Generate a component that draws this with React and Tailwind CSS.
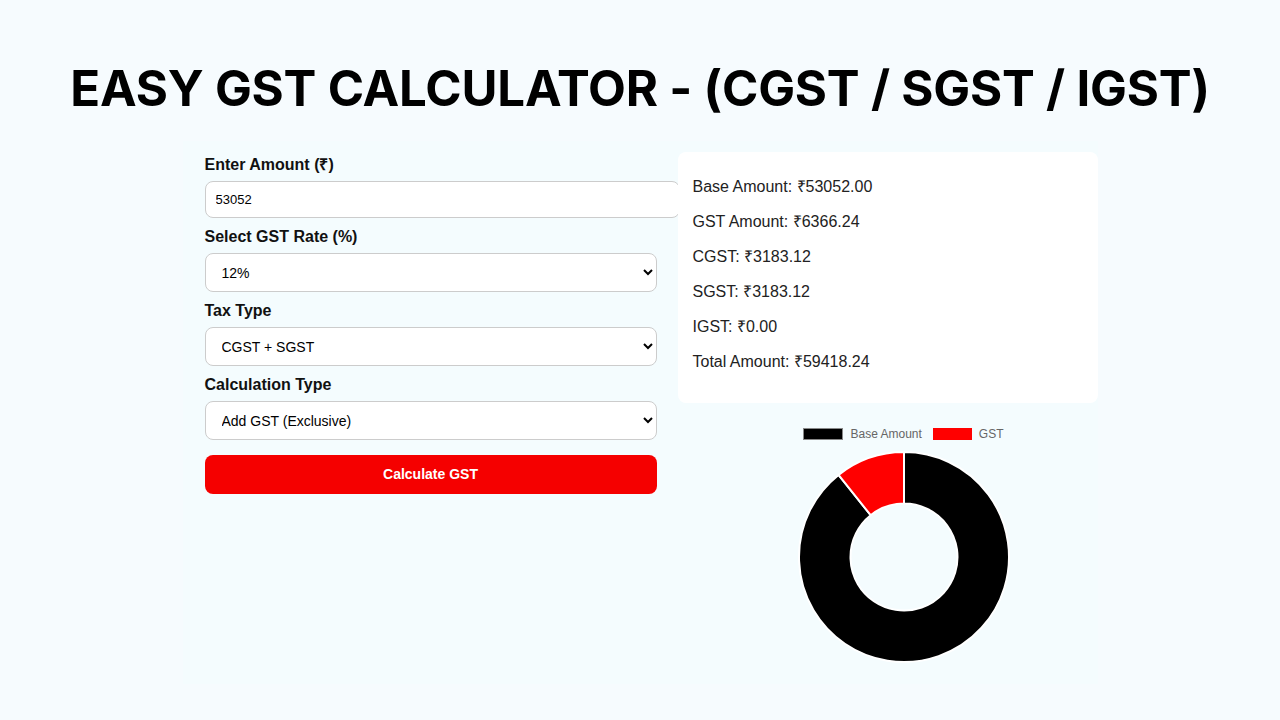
import { useState } from 'react';

const rates = ['0', '5', '12', '18', '28'];

// simple donut drawn as svg arcs
const Donut = ({ base, gst }) => {
  const total = base + gst;
  const cx = 110;
  const cy = 110;
  const r1 = 105;
  const r0 = 53.5;
  const pt = (a, r) => [cx + r * Math.sin(a), cy - r * Math.cos(a)];
  const arc = (a0, a1) => {
    const large = a1 - a0 > Math.PI ? 1 : 0;
    const [x0, y0] = pt(a0, r1);
    const [x1, y1] = pt(a1, r1);
    const [x2, y2] = pt(a1, r0);
    const [x3, y3] = pt(a0, r0);
    return `M${x0} ${y0} A${r1} ${r1} 0 ${large} 1 ${x1} ${y1} L${x2} ${y2} A${r0} ${r0} 0 ${large} 0 ${x3} ${y3} Z`;
  };
  const split = (base / total) * Math.PI * 2;
  return (
    <svg width="220" height="220" viewBox="0 0 220 220">
      <path d={arc(0, split)} fill="#000" stroke="#fff" strokeWidth="2" />
      <path d={arc(split, Math.PI * 2)} fill="#f00" stroke="#fff" strokeWidth="2" />
    </svg>
  );
};

const App = () => {
  const [amount, setAmount] = useState('53052');
  const [rate, setRate] = useState('12');
  const [taxType, setTaxType] = useState('cgst');
  const [calcType, setCalcType] = useState('add');

  const base = 53052;
  const gst = 6366.24;

  const labelCls = 'block h-[18px] leading-[18px] text-[16px] font-bold text-[#111] mb-[7px]';
  const selectCls =
    'block w-full h-[39px] px-[12px] text-[14px] text-black bg-white border border-[#ccc] rounded-[8px] mb-[10px]';

  return (
    <div
      className="min-h-screen bg-[#f6fbfe] overflow-hidden"
      style={{ fontFamily: '"Liberation Sans", Arial, sans-serif' }}
    >
      <h1
        className="text-center text-[49.2px] leading-none font-bold text-black pt-[64px] tracking-[-0.2px]"
        style={{ fontFamily: 'Inter, sans-serif' }}
      >
        EASY GST CALCULATOR - (CGST / SGST / IGST)
      </h1>

      <div className="mx-auto mt-[28px] w-[915px] h-[543px] bg-[#f4fcfe] flex">
        {/* form */}
        <div className="w-[495px] pl-[22px] pr-[21px] pt-[15px]">
          <label className={labelCls}>Enter Amount (₹)</label>
          <input
            type="text"
            value={amount}
            onChange={(e) => setAmount(e.target.value)}
            className="block w-[475px] h-[37px] px-[10px] text-[13px] text-black bg-white border border-[#ccc] rounded-[8px] mb-[10px] outline-none"
          />
          <label className={labelCls}>Select GST Rate (%)</label>
          <select value={rate} onChange={(e) => setRate(e.target.value)} className={selectCls}>
            {rates.map((r) => (
              <option key={r} value={r}>
                {r}%
              </option>
            ))}
          </select>
          <label className={labelCls}>Tax Type</label>
          <select value={taxType} onChange={(e) => setTaxType(e.target.value)} className={selectCls}>
            <option value="cgst">CGST + SGST</option>
            <option value="igst">IGST</option>
          </select>
          <label className={labelCls}>Calculation Type</label>
          <select value={calcType} onChange={(e) => setCalcType(e.target.value)} className={selectCls}>
            <option value="add">Add GST (Exclusive)</option>
            <option value="remove">Remove GST (Inclusive)</option>
          </select>
          <button
            type="button"
            className="mt-[5px] w-full h-[39px] bg-[#f50000] text-white text-[14px] font-bold rounded-[8px]"
          >
            Calculate GST
          </button>
        </div>

        {/* results + chart */}
        <div className="w-[420px] pt-[11px]">
          <div className="bg-white rounded-[8px] pl-[15px] pt-[17px] pb-[24px] text-[16px] text-[#222]">
            <div className="h-[35px] flex items-center">Base Amount: ₹53052.00</div>
            <div className="h-[35px] flex items-center">GST Amount: ₹6366.24</div>
            <div className="h-[35px] flex items-center">CGST: ₹3183.12</div>
            <div className="h-[35px] flex items-center">SGST: ₹3183.12</div>
            <div className="h-[35px] flex items-center">IGST: ₹0.00</div>
            <div className="h-[35px] flex items-center">Total Amount: ₹59418.24</div>
          </div>

          <div className="flex flex-col items-center pl-[32px] pt-[24px]">
            <div className="flex items-center gap-[7px] text-[12px] text-[#666] h-[14px]">
              <span className="w-[40px] h-[12px] bg-black border border-[#888]" />
              <span className="mr-[4px]">Base Amount</span>
              <span className="w-[39px] h-[12px] bg-[#f00]" />
              <span>GST</span>
            </div>
            <div className="mt-[6px]">
              <Donut base={base} gst={gst} />
            </div>
          </div>
        </div>
      </div>
    </div>
  );
};

export default App;
